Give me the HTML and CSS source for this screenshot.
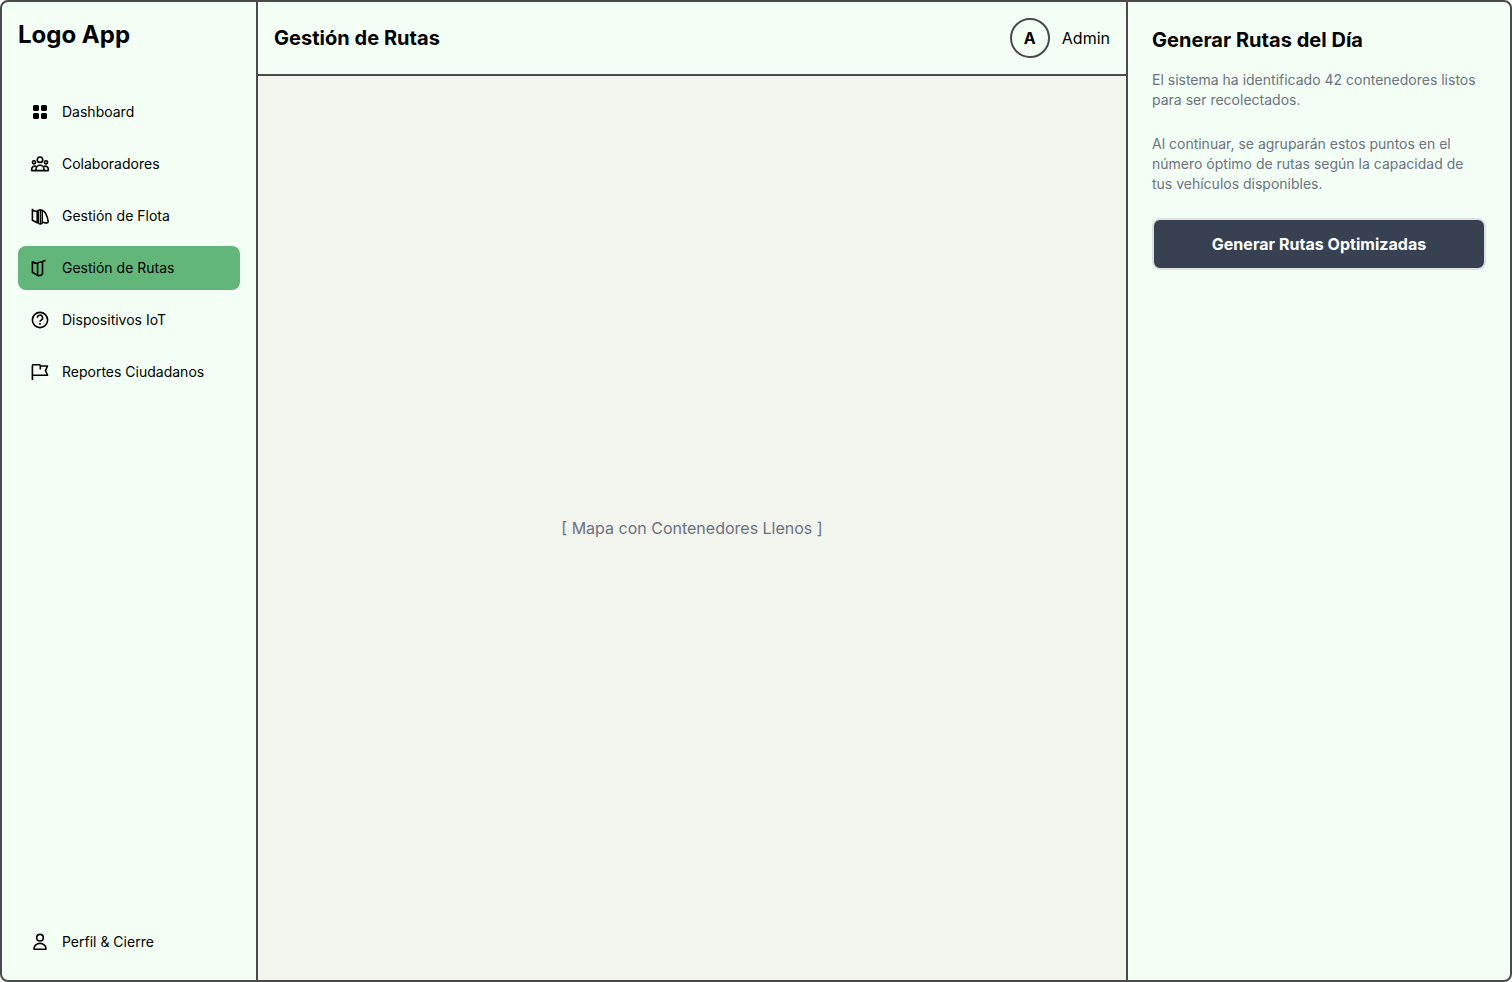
FILE: index.html
```html
<!DOCTYPE html>
<html lang="es">
<head>
<meta charset="utf-8">
<title>Gestión de Rutas</title>
<link rel="stylesheet" href="styles.css">
</head>
<body>
<div class="app">
  <aside class="sidebar">
    <div class="logo">Logo App</div>
    <nav class="nav">
      <a class="item"><svg class="icon solid" viewBox="0 0 20 20"><rect x="3" y="3" width="6" height="6" rx="1.5"/><rect x="11" y="3" width="6" height="6" rx="1.5"/><rect x="3" y="11" width="6" height="6" rx="1.5"/><rect x="11" y="11" width="6" height="6" rx="1.5"/></svg>Dashboard</a>
      <a class="item"><svg class="icon" viewBox="0 0 20 20"><circle cx="10" cy="5.7" r="2.7"/><circle cx="4" cy="8.3" r="1.6"/><circle cx="16" cy="8.3" r="1.6"/><path d="M6 16.6v-1.3a4 4 0 0 1 8 0v1.3ZM6 16.6H1.7v-1.7A2.8 2.8 0 0 1 6.2 12.7M14 16.6h4.3v-1.7a2.8 2.8 0 0 0-4.5-2.2"/></svg>Colaboradores</a>
      <a class="item"><svg class="icon" viewBox="0 0 20 20"><path d="M2.4 2.8v11.4l4.8 2.6V5.3Q4.2 5.5 2.4 3.8"/><path class="thin" d="M7.2 5.3 8.3 4.1v13M8.3 4.4q2-1.2 4 0v12.8q-2 1.6-4 0M10.4 4v13.7"/><path d="M12.3 4.5c2.9.8 5 5.3 5.9 11.2q-.2 1.2-1.4 1.2h-1.5l-3-.9"/></svg>Gestión de Flota</a>
      <a class="item active"><svg class="icon" viewBox="0 0 20 20"><path d="M2.4 3.2v11l5.2 3.2V5.3Q4.4 5.6 2.4 3.7M7.6 5.3Q9 3.6 12.5 4.2v11.8q-2 2.2-4.9 1.4M11.2 4.2l4.4-2"/></svg>Gestión de Rutas</a>
      <a class="item"><svg class="icon" viewBox="0 0 20 20"><circle cx="10" cy="10" r="7.6"/><path d="M7.4 7.8a2.6 2.6 0 1 1 3.8 2.3c-.8.4-1.2.8-1.2 1.7"/><path d="M9.2 13.9h1.6"/></svg>Dispositivos IoT</a>
      <a class="item"><svg class="icon" viewBox="0 0 20 20"><path d="M2.4 18V3.7Q2.4 2.7 3.4 2.7h6q.9 0 .9.9v4M10.3 4h7.2l-2 4.6 2 4.6H2.4"/></svg>Reportes Ciudadanos</a>
    </nav>
    <a class="item"><svg class="icon" viewBox="0 0 20 20"><circle cx="10" cy="5.7" r="3.3"/><path d="M4.1 17.2v-.9a5.9 4.9 0 0 1 11.8 0v.9Z"/></svg>Perfil &amp; Cierre</a>
  </aside>
  <main class="main">
    <header class="topbar">
      <h1 class="title">Gestión de Rutas</h1>
      <div class="user"><span class="avatar">A</span>Admin</div>
    </header>
    <section class="map">[ Mapa con Contenedores Llenos ]</section>
  </main>
  <aside class="panel">
    <h2 class="title">Generar Rutas del Día</h2>
    <p class="copy first">El sistema ha identificado 42 contenedores listos<br>para ser recolectados.</p>
    <p class="copy second">Al continuar, se agruparán estos puntos en el<br>número óptimo de rutas según la capacidad de<br>tus vehículos disponibles.</p>
    <button class="generate">Generar Rutas Optimizadas</button>
  </aside>
</div>
</body>
</html>
```
FILE: styles.css
```css
* { box-sizing: border-box; }
body { margin: 0; font-family: Inter, "Liberation Sans", sans-serif; color: #000; background: #fff; }
.app { display: flex; height: 982px; width: 1512px; border: 2px solid #4a4a4a; border-radius: 8px; background: #f3fff5; overflow: hidden; }
.sidebar { width: 256px; border-right: 2px solid #4a4a4a; padding: 17px 16px 16px; display: flex; flex-direction: column; flex: none; }
.logo { font-size: 24px; line-height: 32px; font-weight: 700; margin-bottom: 39px; white-space: nowrap; }
.nav { display: flex; flex-direction: column; gap: 8px; flex: 1; }
.item { display: flex; align-items: center; gap: 12px; height: 44px; padding: 0 12px; border-radius: 8px; font-size: 14px; line-height: 20px; white-space: nowrap; }
.active { background: #63b679; }
.icon { width: 20px; height: 20px; flex: none; fill: none; stroke: #000; stroke-width: 1.6; stroke-linejoin: round; }
.thin { stroke-width: 1.4; }
.solid { fill: #000; stroke: none; }
.main { flex: 1; display: flex; flex-direction: column; min-width: 0; }
.topbar { height: 74px; border-bottom: 2px solid #4a4a4a; padding: 0 16px; display: flex; align-items: center; justify-content: space-between; }
.title { margin: 0; font-size: 20px; line-height: 28px; font-weight: 700; letter-spacing: 0.03px; }
.user { display: flex; align-items: center; gap: 12px; font-size: 16px; }
.avatar { width: 40px; height: 40px; border: 2px solid #4a4a4a; border-radius: 50%; display: flex; align-items: center; justify-content: center; font-weight: 700; }
.map { flex: 1; display: flex; align-items: center; justify-content: center; background: #f2f4ee; color: #6b7280; font-size: 16px; line-height: 24px; }
.panel { width: 384px; flex: none; border-left: 2px solid #4a4a4a; padding: 24px; }
.copy { margin: 0; color: #6b7280; font-size: 14px; line-height: 20px; white-space: nowrap; }
.first { margin-top: 16px; }
.second { margin-top: 24px; }
.generate { display: block; width: 334px; height: 52px; margin: 24px 0 0; padding: 0; border: 2px solid #e0e0e0; border-radius: 8px; background: #374151; color: #fff; font: 700 16px/24px Inter, "Liberation Sans", sans-serif; letter-spacing: 0.03px; }
```
